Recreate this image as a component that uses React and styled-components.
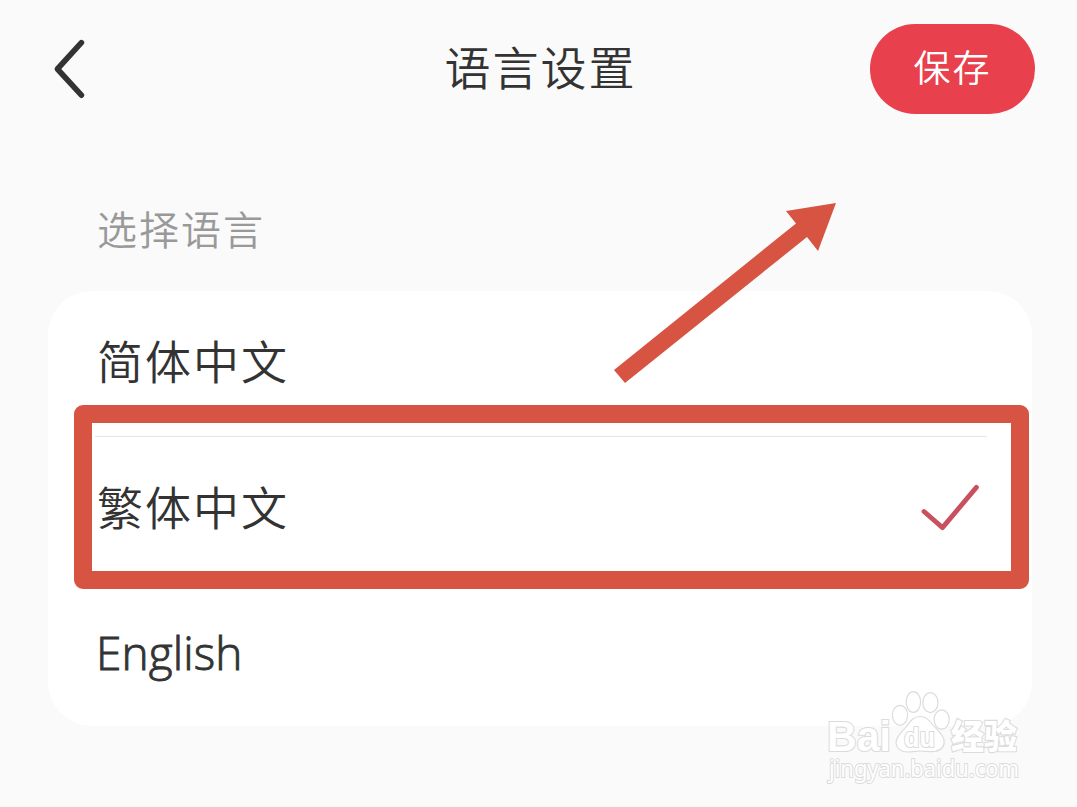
import React, { useState } from "react";
import styled, { createGlobalStyle } from "styled-components";

const languages = [
  { id: "zh-Hans", label: "简体中文" },
  { id: "zh-Hant", label: "繁体中文" },
  { id: "en", label: "English" },
];

export default function App() {

  //currently selected language
  const [selected, setSelected] = useState("zh-Hant");

  return (
    <>
      <GlobalStyle />
      <Page>
        <Header>
          <BackButton aria-label="返回">
            <svg width="34" height="62" viewBox="0 0 34 62">
              <path d="M29.4 4.6 L5.4 31 L29.4 57.2" />
            </svg>
          </BackButton>
          <Title>语言设置</Title>
          <SaveButton>保存</SaveButton>
        </Header>

        <SectionLabel>选择语言</SectionLabel>

        <Card>
          {languages.map(({ id, label }, index) => (
            <Row
              key={id}
              $divider={index === 1}
              onClick={() => setSelected(id)}
            >
              <RowLabel $latin={id === "en"}>{label}</RowLabel>
              {selected === id && (
                <Check width="60" height="48" viewBox="0 0 60 48">
                  <path d="M4 28.5 L22.5 44.6 L56.4 4.4" />
                </Check>
              )}
            </Row>
          ))}
        </Card>

        <Highlight />
        <Arrow width="240" height="200" viewBox="0 0 240 200">
          <polygon points="4,170 186,23.5 176,11 226,3 208,51 197,37 15,183" />
        </Arrow>
        <Watermark />
      </Page>
    </>
  );
}

function Watermark() {
  return (
    <WatermarkSvg width="230" height="115" viewBox="0 0 230 115">
      <text x="7" y="65" fontSize="43" fontWeight="700" textLength="64" lengthAdjust="spacingAndGlyphs">Bai</text>
      {/* paw */}
      <ellipse cx="80" cy="29.3" rx="7.6" ry="10" />
      <ellipse cx="93.4" cy="16" rx="7.2" ry="10.3" />
      <ellipse cx="110.4" cy="16.6" rx="7.6" ry="10" />
      <ellipse cx="121.7" cy="33.5" rx="7.6" ry="9.7" />
      <path d="M100 30.5 C93 30.5 90 36 86 41 C82 46 76 50 76 57 C77 64 83 66 88 66 C93 66 96 65 100 65 C105 65 110 66 115 65.5 C121 64 125 60 124 54 C123 48 117 44 113 39 C109 34 106 30.5 100 30.5 Z" />
      <text className="du" x="84" y="61" fontSize="28" fontWeight="700" textLength="31" lengthAdjust="spacingAndGlyphs">du</text>
      <text className="cjk" x="131" y="62.5" fontSize="34" fontWeight="900" textLength="66" lengthAdjust="spacingAndGlyphs">经验</text>
      <text className="url" x="9" y="91" fontSize="23" textLength="190" lengthAdjust="spacingAndGlyphs">jingyan.baidu.com</text>
    </WatermarkSvg>
  );
}


//styles

const GlobalStyle = createGlobalStyle`
  body {
    margin: 0;
    background-color: #fafafa;
  }
  button {
    font: inherit;
    border: none;
    padding: 0;
    cursor: pointer;
  }
`;

const Page = styled.div`
  position: relative;
  box-sizing: border-box;
  width: 1077px;
  height: 807px;
  overflow: hidden;
  background-color: #fafafa;
  color: #333333;
  font-family: "Noto Sans CJK SC", sans-serif;
`;

const Header = styled.header`
  display: grid;
  grid-template-columns: 1fr auto 1fr;
  align-items: center;
  height: 138px;
  padding: 0 42px 0 52px;
`;

const BackButton = styled.button`
  justify-self: start;
  display: flex;
  background: none;
  path {
    fill: none;
    stroke: #333333;
    stroke-width: 5.6;
    stroke-linecap: round;
    stroke-linejoin: round;
  }
`;

const Title = styled.h1`
  margin: 0 0 0 -6px;
  padding-bottom: 8px;
  font-size: 46px;
  font-weight: 350;
  line-height: 60px;
  letter-spacing: 2px;
`;

const SaveButton = styled.button`
  justify-self: end;
  width: 165px;
  height: 90px;
  padding-bottom: 6px;
  border-radius: 45px;
  background-color: #e8404c;
  color: #ffffff;
  font-size: 37px;
  font-weight: 350;
  line-height: 84px;
  letter-spacing: 2px;
`;

const SectionLabel = styled.h2`
  margin: 60px 0 0 97px;
  font-size: 40px;
  font-weight: 350;
  line-height: 60px;
  letter-spacing: 2px;
  color: #999999;
`;

const Card = styled.ul`
  margin: 33px 45px 0 48px;
  padding: 0 45px 0 47px;
  list-style: none;
  border-radius: 44px;
  background-color: #ffffff;
`;

const Row = styled.li`
  box-sizing: border-box;
  display: flex;
  align-items: center;
  justify-content: space-between;
  height: 145px;
  padding: 0 7px 4px 2px;
  border-top: ${({ $divider }) => ($divider ? "1px solid #e6e6e6" : "none")};
`;

const RowLabel = styled.span`
  padding-bottom: ${({ $latin }) => ($latin ? "0" : "5px")};
  margin-left: ${({ $latin }) => ($latin ? "-1px" : "0")};
  font-family: ${({ $latin }) => ($latin ? '"Open Sans", "Noto Sans", sans-serif' : "inherit")};
  font-size: 46px;
  font-weight: 350;
  line-height: 60px;
  letter-spacing: ${({ $latin }) => ($latin ? "0.1px" : "2px")};
  -webkit-text-stroke: ${({ $latin }) => ($latin ? "0.9px #333333" : "0")};
`;

const Check = styled.svg`
  path {
    fill: none;
    stroke: #c9505e;
    stroke-width: 4.8;
    stroke-linecap: round;
    stroke-linejoin: round;
  }
`;

const Highlight = styled.div`
  position: absolute;
  top: 405px;
  left: 74px;
  box-sizing: border-box;
  width: 955px;
  height: 184px;
  border: 18px solid #d75442;
  border-radius: 9px;
  pointer-events: none;
`;

const Arrow = styled.svg`
  position: absolute;
  top: 200px;
  left: 610px;
  fill: #d75442;
  pointer-events: none;
`;

const WatermarkSvg = styled.svg`
  position: absolute;
  top: 686px;
  left: 820px;
  fill: #ffffff;
  stroke: #dcdcdc;
  stroke-width: 1.2;
  pointer-events: none;
  font-family: "Liberation Sans", sans-serif;
  text {
    paint-order: stroke;
    stroke-width: 2.2;
  }
  .cjk {
    font-family: "Noto Sans CJK SC", sans-serif;
  }
  .url {
    font-family: "Noto Sans", sans-serif;
    stroke-width: 2;
  }
`;
